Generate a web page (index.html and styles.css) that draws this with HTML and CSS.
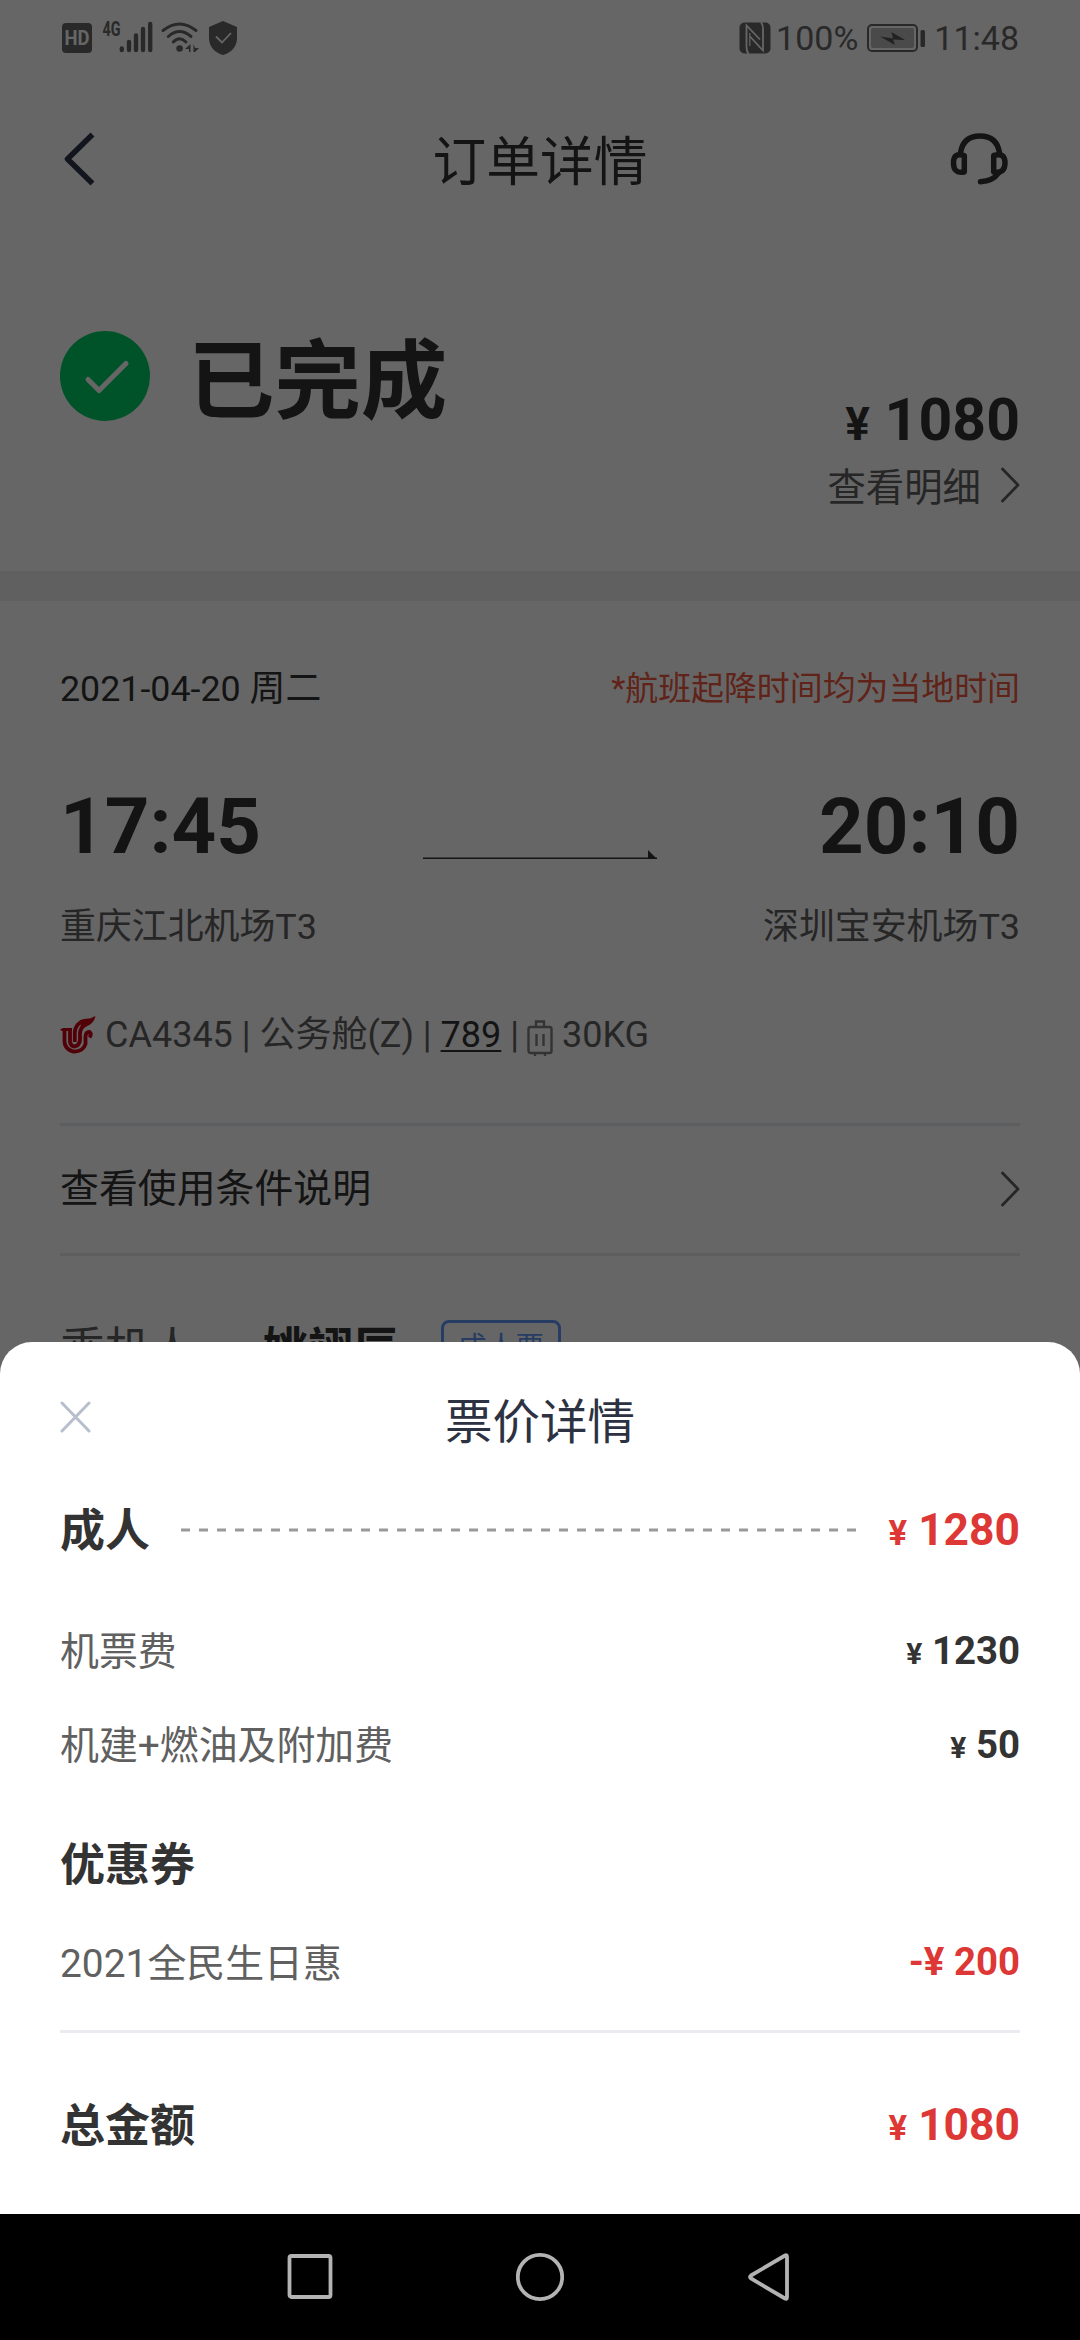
FILE: index.html
```html
<!DOCTYPE html>
<html lang="zh-CN">
<head>
<meta charset="utf-8">
<title>订单详情</title>
<link rel="stylesheet" href="styles.css">
</head>
<body>
<div class="screen">
  <main class="page">
    <div class="status-bar">
      <div class="status-left">
        <svg width="176" height="60" viewBox="62 8 176 60" fill="#666">
          <rect x="62" y="23" width="30" height="30" rx="4"/>
          <text x="77" y="45" text-anchor="middle" textLength="25" lengthAdjust="spacingAndGlyphs" class="hd-label">HD</text>
          <text x="102.500" y="36" textLength="18" lengthAdjust="spacingAndGlyphs" class="net-label">4G</text>
          <g stroke="#666" stroke-width="4.400" stroke-linecap="round">
            <path d="M121.800 48.500v1.500M129 42v8M136 35.500v14.500M143 29v21M150.200 24v26"/>
          </g>
          <g fill="none" stroke="#666" stroke-width="3" stroke-linecap="round">
            <path d="M163 30.500Q179.500 17.500 196 30.500M168.300 36.500Q179.500 26.500 191 36.500M173.300 42Q179.500 35.500 186 42"/>
          </g>
          <circle cx="179.600" cy="48.500" r="3.300"/>
          <path d="M190.500 44v8h-1.500v-3h-4zM193.500 44v8h1.500l4-4h-4z"/>
          <path d="M223 21l14 6v12q-1 12-14 16q-13-4-14-16V27z"/>
          <path d="M216 36.500l6 6L231 33" fill="none" stroke="#fff" stroke-width="1.800"/>
        </svg>
      </div>
      <div class="status-right">
        <svg width="32" height="32" viewBox="0 0 32 32">
          <rect x="0.500" y="0.500" width="31" height="31" rx="5" fill="#666"/>
          <path d="M9.500 32Q7.500 29 7.500 25V3.500L21 17.500M22 0Q24 3 24 7V28.500L11 14.500" stroke="#fff" stroke-width="1.800" fill="none"/>
          <path d="M10.800 11V24" stroke="#fff" stroke-width="1.200" fill="none"/>
        </svg>
        <span class="battery-pct">100%</span>
        <svg class="battery" width="58" height="28" viewBox="0 0 58 28">
          <rect x="1" y="1" width="49" height="26" rx="4" fill="none" stroke="#666" stroke-width="2"/>
          <rect x="4" y="4" width="43" height="20" rx="2" fill="#b9b9b9"/>
          <rect x="53.500" y="6" width="4.500" height="17" rx="1.500" fill="#666"/>
          <path d="M13 12.500l13 2-1.500-6.500L38 16l-12-.5 2 5.500z" fill="#555"/>
        </svg>
        <span class="clock">11:48</span>
      </div>
    </div>

    <header class="nav-header">
      <svg width="60" height="60" viewBox="60 129 60 60" fill="none" stroke="#2f364b" stroke-width="5.500" stroke-linejoin="round">
        <path d="M92.500 134.500L67.500 159l25 24.500"/>
      </svg>
      <h1 class="nav-title">订单详情</h1>
      <svg width="60" height="60" viewBox="948 129 60 60" fill="none" stroke="#333" stroke-width="5.500" stroke-linecap="round">
        <path d="M959.500 153Q962 136 979 136T998.500 153"/>
        <path d="M963.300 172V155.500Q952.500 152 952.500 163t10.800 9zM992.700 172V155.500Q1004 152 1004 163t-11.300 9z" stroke-linejoin="round"/>
        <path d="M997.500 173Q992 181 979.500 181.700"/>
      </svg>
    </header>

    <section class="order-status">
      <div class="state">
        <svg width="90" height="90" viewBox="0 0 90 90">
          <circle cx="45" cy="45" r="45" fill="#00ce66"/>
          <path d="M28 48.500L39 59.500L66 32.500" fill="none" stroke="#fff" stroke-width="5" stroke-linecap="round" stroke-linejoin="round"/>
        </svg>
        <h2 class="state-text">已完成</h2>
      </div>
      <div class="order-price">
        <div class="price price-xl"><span class="yen">¥</span> 1080</div>
        <div class="detail-link"><span class="detail-text">查看明细</span>
          <svg width="20" height="36" viewBox="0 0 20 36"><path class="chevron" d="M2.500 2L18 18 2.500 34"/></svg>
        </div>
      </div>
    </section>

    <div class="band"></div>

    <section class="flight">
      <div class="date-row">
        <span class="date">2021-04-20 周二</span>
        <span class="notice">*航班起降时间均为当地时间</span>
      </div>
      <div class="time-row">
        <span class="time">17:45</span>
        <svg class="route" width="234" height="10" viewBox="0 0 234 10"><path d="M0 8.300H234" stroke="#333" stroke-width="1.600"/><path d="M225 0l9 9h-9z" fill="#333"/></svg>
        <span class="time">20:10</span>
      </div>
      <div class="airport-row">
        <span>重庆江北机场T3</span>
        <span>深圳宝安机场T3</span>
      </div>
      <div class="info-row">
        <svg class="airline" width="36" height="46" viewBox="0 0 36 46">
          <g fill="none" stroke="#cd0014" stroke-width="3.800">
            <path d="M4.500 19V31Q5 38 13 40.500Q23 41 25.500 33V25.500Q26 20.500 29.500 21Q32 23 29.500 26.500"/>
            <path d="M10 18V31Q11 35.500 14.500 35.500Q19.500 34.500 20 29V22Q20.500 16 26 13.500"/>
            <path d="M14.800 31V21Q15.500 13 23 10"/>
          </g>
          <path d="M20 9.500Q25 7 30 7.500L35.500 5Q34 13 25 16L21 17zM0 18.500l3-1.500h9v3H2z" fill="#cd0014"/>
        </svg>
        <span class="info-text">CA4345 | 公务舱(Z) | <u>789</u> |</span>
        <svg class="luggage" width="26" height="36" viewBox="0 0 26 36" fill="none" stroke="#808080" stroke-width="2.400">
          <rect x="1.500" y="7" width="23" height="26" rx="2"/>
          <path d="M9 7V1.500h8V7M9.500 14v12M16.500 14v12M8 33v3M18 33v3"/>
        </svg>
        <span class="allowance">30KG</span>
      </div>
      <div class="terms-row">
        <span class="terms-text">查看使用条件说明</span>
        <svg width="20" height="36" viewBox="0 0 20 36"><path class="chevron" d="M2.500 2L18 18 2.500 34"/></svg>
      </div>
      <div class="passenger-row">
        <span class="passenger-label">乘机人</span>
        <span class="passenger-name">姚翊辰</span>
        <span class="ticket-tag">成人票</span>
      </div>
    </section>
  </main>

  <div class="mask"></div>

  <section class="sheet">
    <header class="sheet-header">
      <svg width="32" height="32" viewBox="0 0 32 32"><path d="M2 2L29 30M29 2L2 30" stroke="#b8bfcc" stroke-width="3" stroke-linecap="round"/></svg>
      <h2 class="sheet-title">票价详情</h2>
      <i></i>
    </header>
    <div class="row row-adult">
      <b class="group">成人</b>
      <svg class="dashes" height="4"><path d="M0 2H680" stroke="#999" stroke-width="3" stroke-dasharray="9 9"/></svg>
      <span class="price price-lg red"><span class="yen">¥</span> 1280</span>
    </div>
    <div class="row row-fare"><span class="label">机票费</span><span class="price"><span class="yen">¥</span> 1230</span></div>
    <div class="row row-tax"><span class="label">机建+燃油及附加费</span><span class="price"><span class="yen">¥</span> 50</span></div>
    <div class="row row-coupon"><b class="group">优惠券</b></div>
    <div class="row row-discount"><span class="label">2021全民生日惠</span><span class="price red">-¥ 200</span></div>
    <div class="row row-total"><b class="group">总金额</b><span class="price price-lg red"><span class="yen">¥</span> 1080</span></div>
  </section>

  <nav class="system-nav">
    <svg width="48" height="56" viewBox="0 0 48 56"><rect x="3.500" y="7" width="41" height="41" rx="2" /></svg>
    <svg width="48" height="56" viewBox="0 0 48 56"><circle cx="24" cy="28" r="22.200"/></svg>
    <svg width="48" height="56" viewBox="0 0 48 56"><path d="M5 26.500L39 6.500q2-1 2 1.500V48q0 2.500-2 1.500L5 29.500q-2-1.500 0-3z"/></svg>
  </nav>
</div>
</body>
</html>
```
FILE: styles.css
```css
* { box-sizing: border-box; margin: 0; padding: 0; }
body {
  width: 1080px;
  height: 2340px;
  overflow: hidden;
  font-family: Roboto, "Noto Sans CJK SC", sans-serif;
  color: #333;
}
svg { display: block; flex: none; }
.screen {
  position: relative;
  width: 1080px;
  height: 2340px;
  display: flex;
  flex-direction: column;
  background: #fff;
  overflow: hidden;
}
.page { height: 2214px; overflow: hidden; display: flex; flex-direction: column; white-space: nowrap; }

/* status bar */
.status-bar {
  height: 76px;
  padding: 0 61px 0 62px;
  display: flex;
  align-items: center;
  justify-content: space-between;
  color: #666;
  font-size: 34px;
}
.status-right { display: flex; align-items: center; }
.battery-pct { margin-left: 5px; }
.battery { margin-left: 9px; }
.clock { margin-left: 9px; }
.hd-label { font: 700 20px Roboto, sans-serif; fill: #fff; }
.net-label { font: 700 20px Roboto, sans-serif; fill: #666; }

/* title bar */
.nav-header {
  height: 166px;
  padding: 0 71px 0 60px;
  display: flex;
  align-items: center;
  justify-content: space-between;
}
.nav-title { font-size: 53.700px; font-weight: 400; line-height: 80px; margin-left: 11px; margin-top: 8px; }

/* order state */
.order-status { height: 329px; padding: 0 60px; display: flex; justify-content: space-between; }
.state { display: flex; align-items: center; height: 90px; margin-top: 89px; gap: 38px; }
.state-text { font-size: 86.400px; font-weight: 700; line-height: 100px; margin-top: 14px; }
.order-price { margin-top: 142px; }
.order-price .price { text-align: right; line-height: 72px; }
.detail-link {
  display: flex;
  align-items: center;
  justify-content: flex-end;
  gap: 19px;
  height: 58px;
  margin-top: -4px;
  font-size: 38.400px;
  color: #606060;
}
.detail-text { margin-top: -3px; }
.chevron { fill: none; stroke: #606060; stroke-width: 2.800; stroke-linecap: round; stroke-linejoin: round; }

.price { font-weight: 700; font-size: 38.400px; color: #333; }
.price .yen { font-size: 0.78em; }
.price-lg { font-size: 44.400px; }
.price-xl { font-size: 59px; }
.price.red { color: #dd3835; }

.band { height: 30px; background: #f1f1f1; flex: none; }

/* flight */
.flight { padding: 0 60px; font-size: 36px; color: #606060; }
.flight > div { display: flex; align-items: center; justify-content: space-between; }
.flight > .date-row { height: 60px; margin-top: 54px; }
.date { color: #333; font-size: 35.800px; }
.notice { font-size: 32.900px; color: #f0573f; }
.flight > .time-row { height: 100px; margin-top: 61px; }
.time { font-size: 78px; font-weight: 700; color: #333; }
.route { margin-top: 58px; }
.flight > .airport-row { height: 60px; margin-top: 17px; font-size: 35.900px; }
.flight > .info-row { height: 96px; margin-top: 33px; justify-content: flex-start; }
.info-text { margin: -6px 0 0 9px; }
.info-text u {
  color: #333;
  text-decoration: underline 2px;
  text-underline-offset: 3px;
  text-decoration-skip-ink: none;
}
.luggage { margin: 8px 9px 0 8px; }
.allowance { margin-top: 2px; }
.flight > .terms-row {
  height: 133px;
  margin-top: 41px;
  border-top: 3px solid #e9ebee;
  border-bottom: 3px solid #ebebeb;
  font-size: 38.880px;
  color: #333;
}
.terms-text { margin-top: -10px; }
.terms-row svg { margin-top: -2px; }
.flight > .passenger-row { height: 60px; margin-top: 62px; justify-content: flex-start; font-size: 45px; }
.passenger-label { margin-top: -5px; }
.passenger-name { font-weight: 700; color: #333; margin: -5px 0 0 68px; }
.ticket-tag {
  margin-left: 43px;
  width: 120px;
  height: 56px;
  border: 3px solid #5f97f8;
  border-radius: 8px;
  font-size: 28.800px;
  line-height: 49px;
  text-align: center;
  color: #5f97f8;
}

.mask { position: absolute; inset: 0 0 126px; background: rgba(0, 0, 0, 0.6); }

/* price sheet */
.sheet {
  position: absolute;
  left: 0;
  right: 0;
  bottom: 126px;
  height: 872px;
  padding: 0 60px;
  background: #fff;
  border-radius: 32px 32px 0 0;
  display: flex;
  flex-direction: column;
  white-space: nowrap;
}
.sheet-header { height: 128px; padding-top: 31px; display: flex; align-items: center; justify-content: space-between; }
.sheet-header svg { margin-top: -10px; }
.sheet-header i { width: 32px; }
.sheet-title { font-size: 47.500px; font-weight: 400; color: #2d3242; line-height: 70px; margin-top: 2px; }
.row {
  display: flex;
  align-items: center;
  justify-content: space-between;
  font-size: 38.880px;
  color: #606060;
}
.row-adult { height: 120px; gap: 31px; }
.row-fare { height: 120px; }
.row-tax { height: 68px; }
.row-coupon { height: 172px; }
.row-discount { height: 83px; padding-bottom: 57px; border-bottom: 3px solid #e9ebf0; }
.row-total { height: 181px; padding-top: 3px; }
.label { margin-top: -4px; }
.group { font-size: 45px; font-weight: 700; color: #333; margin-top: -5px; }
.dashes { flex: 1 1 0; width: 0; }

/* system navigation */
.system-nav {
  height: 126px;
  background: #000;
  display: flex;
  align-items: center;
  justify-content: center;
  gap: 182px;
}
.system-nav svg { fill: none; stroke: #b3b3b3; stroke-width: 3.800; }
```
